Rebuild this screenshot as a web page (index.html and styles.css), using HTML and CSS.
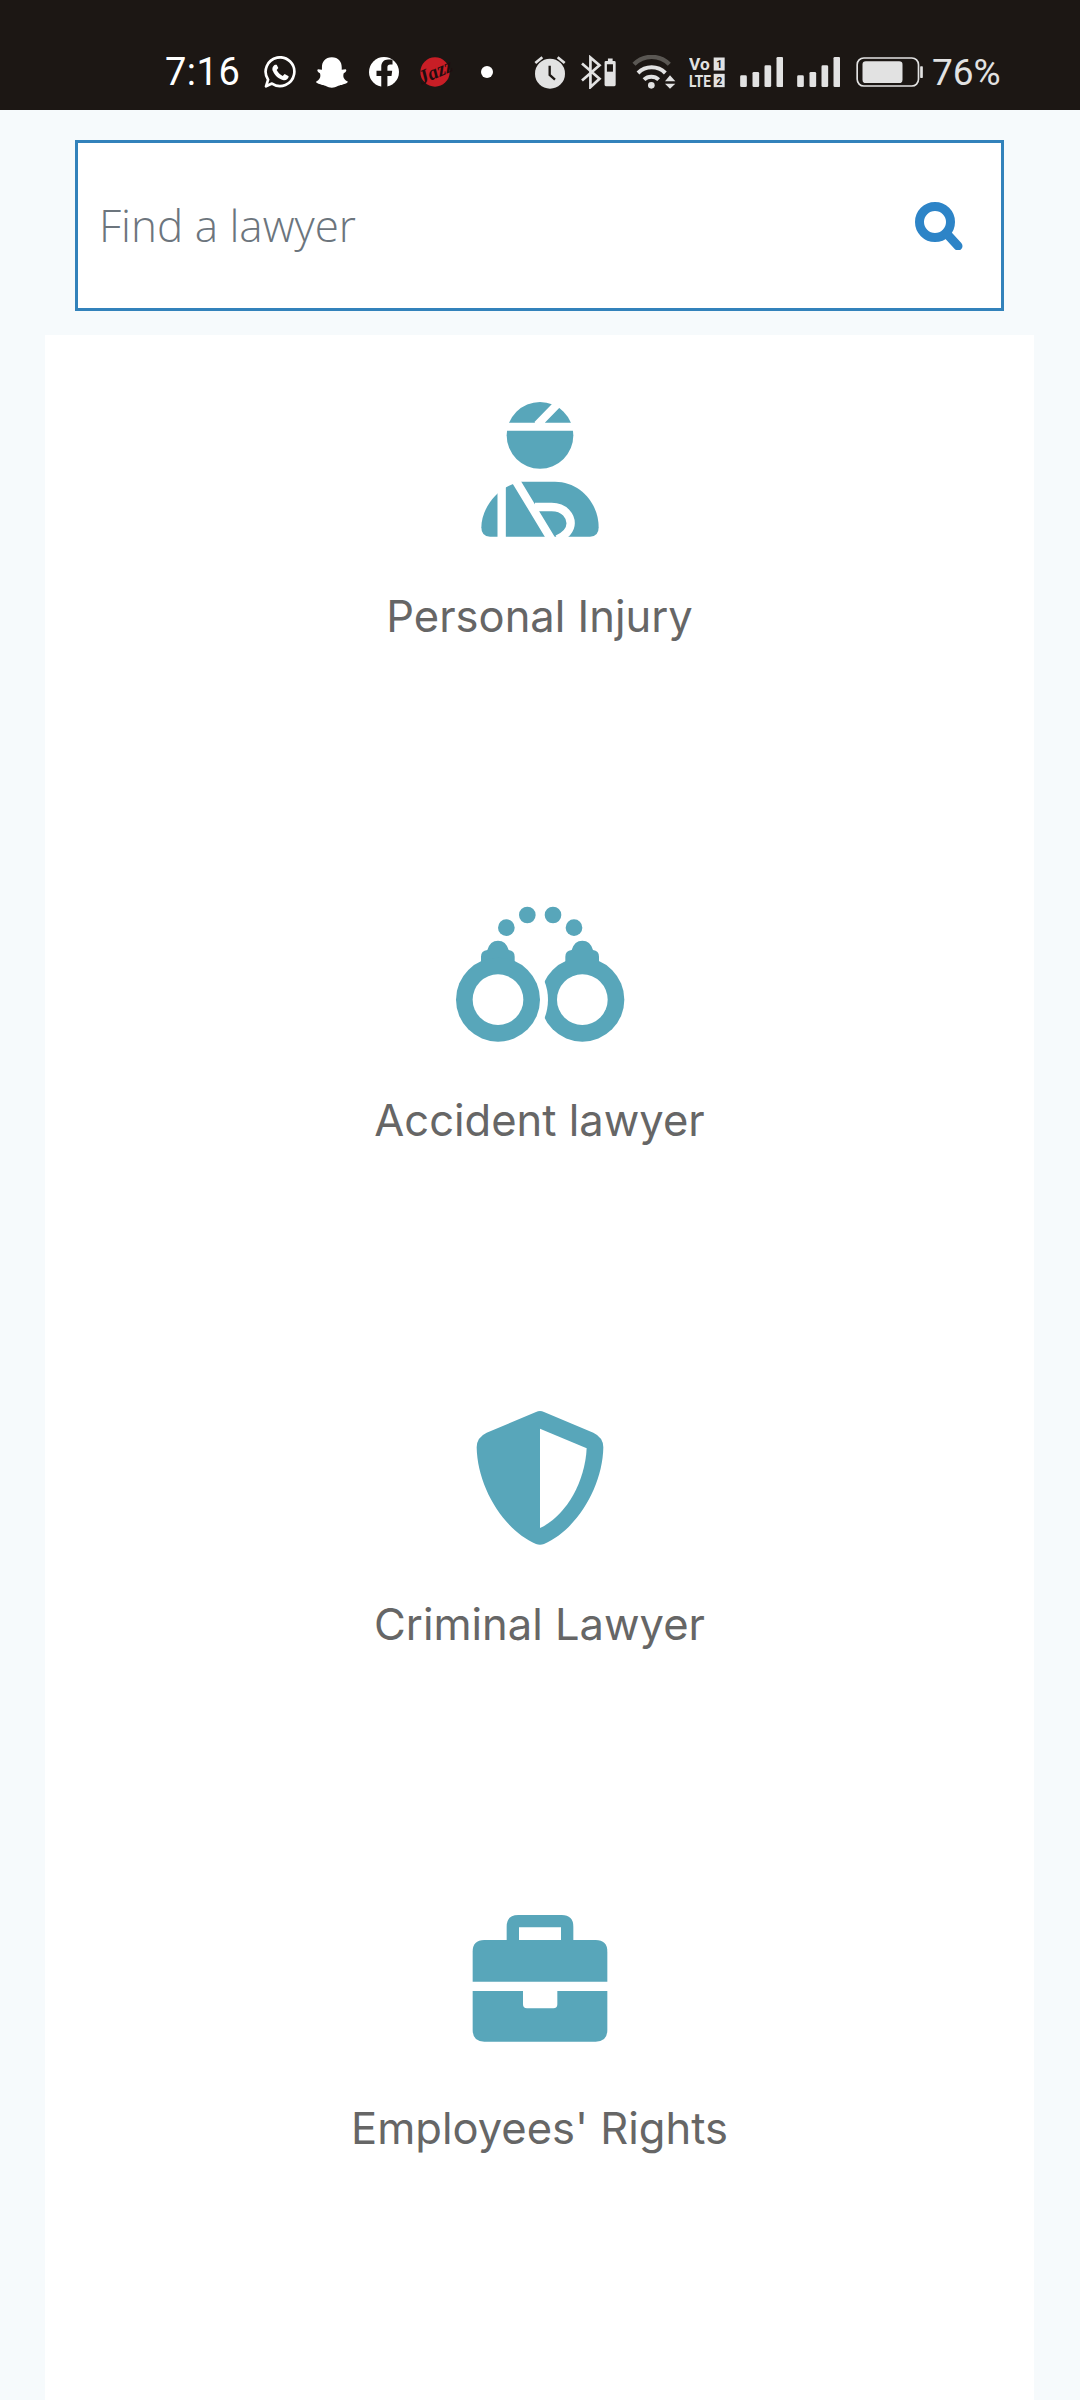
FILE: index.html
```html
<!DOCTYPE html>
<html lang="en">

<head>
	<meta charset="UTF-8">
	<meta name="viewport" content="width=device-width, initial-scale=1.0">

	<title>Find a lawyer</title>

	<link rel="stylesheet" href="styles.css">
</head>

<body>
	<div class="status-bar">
		<span class="time">7:16</span>
		<svg class="whatsapp" width="32" height="32" viewBox="372 108 96 96">
			<path d="M378 199 L384.3 179 A43 43 0 1 1 396 190.7 Z" fill="none" stroke="#fff" stroke-width="8" stroke-linejoin="round" />
			<path d="M405 134 C398 138 395 146 399 154 C405 168 418 178 431 181 C439 182 446 176 446 169 L434 162 L428 168 C420 164 414 158 410 150 L415 144 L410 134 Z" fill="#fff" />
		</svg>
		<svg class="snapchat" width="32" height="31" viewBox="528 112 97 92">
			<path d="M576 112 C596 112 606 126 606 142 L606 150 L618 148 C622 150 620 156 612 160 C608 172 614 180 625 186 C622 192 612 192 606 196 C596 196 590 204 576 204 C562 204 556 196 546 196 C540 192 530 192 528 186 C538 180 544 172 540 160 C532 156 530 150 534 148 L546 150 L546 142 C546 126 556 112 576 112 Z" fill="#fff" />
		</svg>
		<svg class="facebook" width="30" height="30" viewBox="688 112 88 88">
			<circle cx="732" cy="156" r="44" fill="#fff" />
			<path d="M742 200 V168 H754 L756 152 H742 V142 C742 137 745 134 750 134 H757 V120 C752 119 748 119 744 119 C732 119 724 127 724 140 V152 H710 V168 H724 V200 Z" fill="#1c1714" />
		</svg>
		<svg class="jazz" width="46" height="50" viewBox="818 80 138 150">
			<circle cx="887" cy="155" r="44" fill="#c81e26" />
			<text class="jazz-text" x="835" y="174" textLength="106" lengthAdjust="spacingAndGlyphs" transform="rotate(-24 887 155)">Jazz</text>
		</svg>
		<span class="dot"></span>
		<svg class="alarm" width="32" height="34" viewBox="45 105 96 100">
			<path d="M49 128 L70 111 M116 111 L137 128" stroke="#e2e2e2" stroke-width="8" fill="none" />
			<circle cx="93" cy="160" r="45" fill="#e2e2e2" />
			<path d="M92 136 V164 L108 178" stroke="#1c1714" stroke-width="7" fill="none" />
		</svg>
		<svg class="bluetooth" width="35" height="34" viewBox="185 105 104 100">
			<path d="M188 130 L240 175 L213 200 V112 L240 135 L188 180" fill="none" stroke="#e2e2e2" stroke-width="8" />
			<path d="M265 115 H279 V122 H284 Q288 122 288 126 V193 Q288 197 284 197 H259 Q255 197 255 193 V126 Q255 122 259 122 H265 Z" fill="#e2e2e2" />
			<rect x="262" y="132" width="18" height="22" fill="#1c1714" />
		</svg>
		<svg class="wifi" width="45" height="34" viewBox="333 105 135 100">
			<path d="M342 132 A74 74 0 0 1 448 132" fill="none" stroke="#5a5753" stroke-width="13" />
			<path d="M354 158 A58 58 0 0 1 436 158" fill="none" stroke="#e2e2e2" stroke-width="12" />
			<path d="M372 178 A32 32 0 0 1 416 178" fill="none" stroke="#e2e2e2" stroke-width="12" />
			<circle cx="394" cy="195" r="10" fill="#e2e2e2" />
			<path d="M435 183 L450 165 L466 183 Z M435 190 H466 L450 205 Z" fill="#e2e2e2" />
		</svg>
		<svg class="volte" width="36" height="41" viewBox="508 96 108 122">
			<text class="volte-text" x="508" y="150" textLength="62" lengthAdjust="spacingAndGlyphs">Vo</text>
			<text class="volte-text" x="508" y="200" textLength="66" lengthAdjust="spacingAndGlyphs">LTE</text>
			<rect x="582" y="112" width="33" height="39" fill="#e2e2e2" />
			<rect x="582" y="161" width="33" height="40" fill="#e2e2e2" />
			<text class="volte-sim" x="590" y="145">1</text>
			<text class="volte-sim" x="590" y="194">2</text>
		</svg>
		<svg class="signal" width="43" height="30" viewBox="660 110 128 90">
			<rect x="660" y="165" width="20" height="35" rx="4" />
			<rect x="697" y="155" width="20" height="45" rx="4" />
			<rect x="733" y="135" width="20" height="65" rx="4" />
			<rect x="769" y="110" width="20" height="90" rx="4" />
		</svg>
		<svg class="signal" width="43" height="30" viewBox="660 110 128 90">
			<rect x="660" y="165" width="20" height="35" rx="4" />
			<rect x="697" y="155" width="20" height="45" rx="4" />
			<rect x="733" y="135" width="20" height="65" rx="4" />
			<rect x="769" y="110" width="20" height="90" rx="4" />
		</svg>
		<svg class="battery" width="67" height="30" viewBox="1008 112 200 90">
			<rect x="1011" y="115" width="184" height="84" rx="20" fill="none" stroke="#e2e2e2" stroke-width="5" />
			<rect x="1027" y="125" width="120" height="65" rx="10" fill="#e2e2e2" />
			<rect x="1200" y="140" width="8" height="35" rx="2" fill="#e2e2e2" />
		</svg>
		<span class="percent">76%</span>
	</div>

	<div class="search">
		<input class="search-input" type="text" placeholder="Find a lawyer">
		<svg class="search-icon" width="48" height="48" viewBox="0 0 48 48">
			<circle cx="20" cy="20" r="15.5" fill="none" stroke="#2d84c7" stroke-width="9" />
			<path d="M32 32 L43 44" stroke="#2d84c7" stroke-width="9" stroke-linecap="round" />
		</svg>
	</div>

	<div class="card">
		<a class="category">
			<svg class="category-icon" width="220" height="170" viewBox="-30 0 660 510">
				<circle cx="300" cy="166" r="100" />
				<path class="cut" d="M190 140 H410 M362 62 L292 134" stroke-width="24" />
				<path d="M150 470 Q124 470 124 442 C124 395 160 325 240 305 H345 C420 305 476 370 476 442 Q476 470 450 470 Z" />
				<path class="cut" d="M185 310 V480 M226 300 L335 480 M285 381 H335 C375 381 392 410 392 430 C392 450 375 468 352 478" stroke-width="25" />
			</svg>
			<span class="category-name">Personal Injury</span>
		</a>
		<a class="category">
			<svg class="category-icon" width="220" height="170" viewBox="0 -18 660 510">
				<circle cx="229" cy="113" r="25" />
				<circle cx="292" cy="75" r="25" />
				<circle cx="369" cy="75" r="25" />
				<circle cx="432" cy="113" r="25" />
				<circle cx="457" cy="329" r="126" />
				<circle cx="204" cy="329" r="150" fill="#fff" />
				<path d="M153 240 V200 Q153 182 172 180 Q180 152 204 152 Q228 152 236 180 Q254 182 254 200 V240 Z" />
				<path d="M406 240 V200 Q406 182 425 180 Q433 152 457 152 Q481 152 489 180 Q507 182 507 200 V240 Z" />
				<circle cx="204" cy="329" r="126" />
				<circle cx="204" cy="329" r="76" fill="#fff" />
				<circle cx="457" cy="329" r="76" fill="#fff" />
			</svg>
			<span class="category-name">Accident lawyer</span>
		</a>
		<a class="category">
			<svg class="category-icon" width="220" height="170" viewBox="-60 -6 660 510">
				<path d="M258 66 Q270 60 282 66 L430 128 Q460 142 460 172 C458 290 380 420 282 462 Q270 467 258 462 C160 420 82 290 80 172 Q80 142 110 128 Z" />
				<path d="M270 116 L410 175 C405 280 345 380 270 414 Z" fill="#fff" />
			</svg>
			<span class="category-name">Criminal Lawyer</span>
		</a>
		<a class="category">
			<svg class="category-icon" width="220" height="170" viewBox="-60 -24 660 510">
				<path fill-rule="evenodd" d="M170 130 V80 Q170 45 205 45 H335 Q370 45 370 80 V130 H333 V82 H207 V130 Z" />
				<path d="M68 245 V155 Q68 120 103 120 H437 Q472 120 472 155 V245 Z" />
				<path d="M68 273 H219 V313 Q219 325 231 325 H310 Q322 325 322 313 V273 H472 V390 Q472 425 437 425 H103 Q68 425 68 390 Z" />
			</svg>
			<span class="category-name">Employees' Rights</span>
		</a>
	</div>
</body>

</html>
```

FILE: styles.css
```css
*,
*:before,
*:after {
	box-sizing: border-box;
}

html {
	font: normal 16px/1.4 "Inter", sans-serif;
}

body {
	width: 1080px;
	height: 2400px;
	margin: 0;
	padding: 0;
	overflow: hidden;

	display: flex;
	flex-direction: column;

	background-color: #f6fafc;
}

.status-bar {
	flex: 0 0 110px;
	padding: 34px 0 0 165px;

	display: flex;
	align-items: center;

	background-color: #1c1714;
	color: #e2e2e2;
}

.status-bar svg {
	flex: 0 0 auto;
	fill: #e2e2e2;
}

.time {
	width: 73px;
	margin-right: 26px;
	font: 400 38px/1 "Roboto", sans-serif;
	letter-spacing: .5px;
	color: #fff;
}

.whatsapp {
	margin-right: 20px;
}

.snapchat {
	margin-right: 21px;
}

.facebook {
	margin-right: 13px;
}

.jazz {
	margin-right: 23px;
}

.jazz-text {
	font: italic 700 60px "Liberation Serif", serif;
	fill: #1f0d0f;
}

.dot {
	flex: 0 0 12px;
	height: 12px;
	margin-right: 41px;
	border-radius: 50%;
	background-color: #fff;
}

.alarm,
.bluetooth {
	margin-right: 15px;
}

.signal {
	margin-right: 14px;
}

.wifi {
	margin-right: 13px;
}

.volte {
	margin-right: 15px;
}

.volte-text {
	font: 700 50px "Roboto", sans-serif;
	fill: #e2e2e2;
}

.volte-sim {
	font: 700 32px "Roboto", sans-serif;
	fill: #1c1714;
}

.battery {
	margin-left: 2px;
	margin-right: 9px;
}

.percent {
	font: 400 37px/1 "Roboto", sans-serif;
}

.search {
	flex: 0 0 171px;
	margin: 30px 76px 24px 75px;
	padding: 0 38px 0 21px;
	border: 3px solid #3282bb;

	display: flex;
	align-items: center;

	background-color: #fff;
}

.search-input {
	flex: 1 1 auto;
	min-width: 0;
	padding: 0;
	border: 0;
	outline: 0;
	background: none;
	font: 300 44px/1.2 "Open Sans", sans-serif;
}

.search-input::placeholder {
	color: #6c757d;
	opacity: 1;
}

.search-icon {
	flex: 0 0 auto;
}

.card {
	flex: 1 1 auto;
	margin: 0 46px 0 45px;
	padding-top: 45px;

	display: flex;
	flex-direction: column;

	background-color: #fff;
}

.category {
	flex: 0 0 504px;

	display: flex;
	flex-direction: column;
	align-items: center;
}

.category-icon {
	flex: 0 0 auto;
	fill: #58a6ba;
}

.category-icon .cut {
	fill: none;
	stroke: #fff;
}

.category-name {
	margin-top: 36px;
	font: 400 43.5px/60px "Inter", sans-serif;
	color: #666;
}
```
